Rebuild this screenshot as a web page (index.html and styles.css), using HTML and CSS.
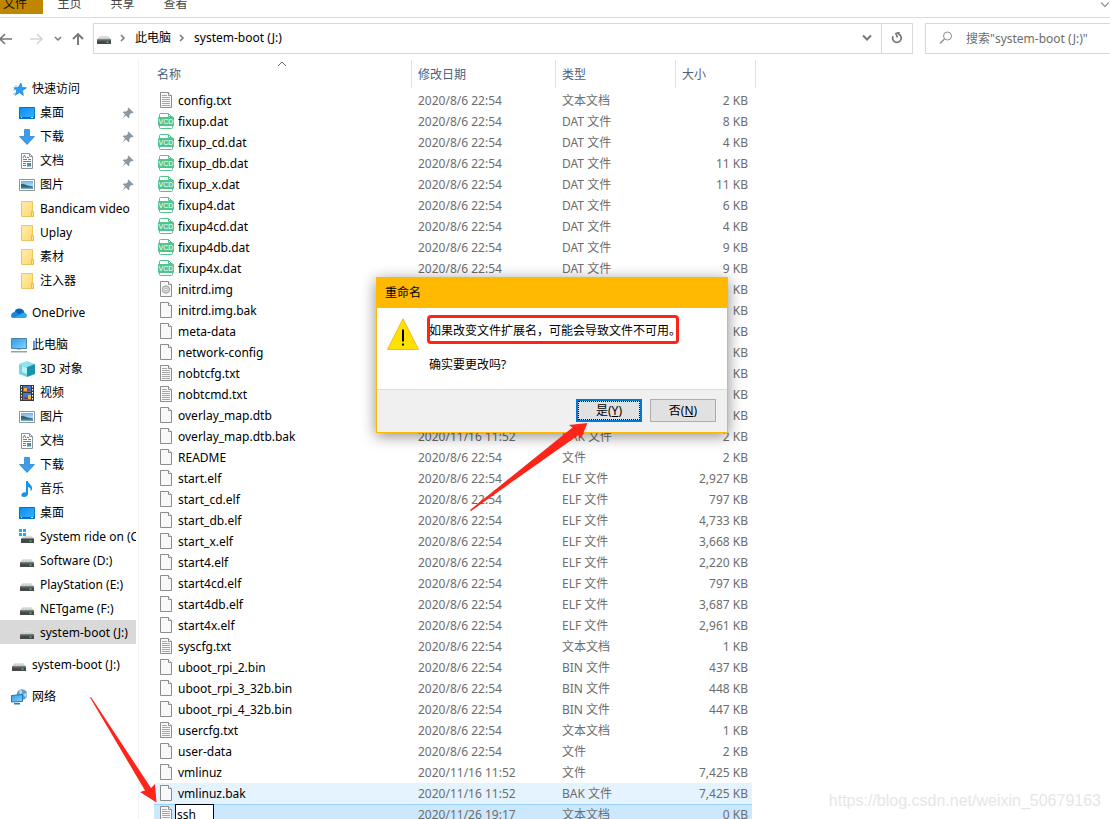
FILE: index.html
```html
<!DOCTYPE html>
<html lang="zh-CN">
<head>
<meta charset="utf-8">
<title>system-boot (J:)</title>
<link rel="stylesheet" href="styles.css">
</head>
<body>
<svg class="defs" aria-hidden="true">
  <defs>
    <linearGradient id="blue" x1="0" y1="0" x2="1" y2="1"><stop offset="0" stop-color="#0a8cf0"/><stop offset="1" stop-color="#38b4ff"/></linearGradient>
    <linearGradient id="screen" x1="0" y1="0" x2="1" y2="1"><stop offset="0" stop-color="#2f9be8"/><stop offset="1" stop-color="#7fd4ff"/></linearGradient>
    <linearGradient id="sky" x1="0" y1="0" x2="0" y2="1"><stop offset="0" stop-color="#6fb1e8"/><stop offset="1" stop-color="#e8f4fb"/></linearGradient>
    <linearGradient id="gold" x1="0" y1="0" x2="1" y2="1"><stop offset="0" stop-color="#ffeba8"/><stop offset="1" stop-color="#ffd970"/></linearGradient>
    <linearGradient id="metal" x1="0" y1="0" x2="0" y2="1"><stop offset="0" stop-color="#e4e6e7"/><stop offset="1" stop-color="#b9bdbf"/></linearGradient>
  </defs>
  <symbol id="i-page" viewBox="0 0 16 16"><path d="M2.500.500h8l3 3v12h-11z" fill="#f9f9f9" stroke="#8c8c8c"/><path d="M10.500.500v3h3" fill="#fff" stroke="#8c8c8c"/></symbol>
  <symbol id="i-text" viewBox="0 0 16 16"><path d="M2.500.500h8l3 3v12h-11z" fill="#f9f9f9" stroke="#8c8c8c"/><path d="M10.500.500v3h3" fill="#fff" stroke="#8c8c8c"/><path d="M4 3.500h5M4 5.500h8M4 7.500h8M4 9.500h8M4 11.500h8M4 13.500h8" stroke="#a6a6a6"/></symbol>
  <symbol id="i-disc" viewBox="0 0 16 16"><path d="M2.500.500h8l3 3v12h-11z" fill="#f9f9f9" stroke="#8c8c8c"/><path d="M10.500.500v3h3" fill="#fff" stroke="#8c8c8c"/><circle cx="8" cy="8.500" r="3.700" fill="#d3d6d8" stroke="#a0a4a7"/><circle cx="8" cy="8.500" r="1.200" fill="#fff" stroke="#999" stroke-width=".6"/></symbol>
  <symbol id="i-vcd" viewBox="0 0 16 16"><path d="M1.500 4V1.500a1 1 0 0 1 1-1h8l4 4M1.500 13v1.500a1 1 0 0 0 1 1h11a1 1 0 0 0 1-1V13M10.500.500v3h4" fill="none" stroke="#52c58c"/><rect y="4" width="16" height="9" rx="1" fill="#52c58c"/><text x="8" y="11" text-anchor="middle" class="vcd">VCD</text></symbol>
  <symbol id="i-drive" viewBox="0 0 16 16"><path d="M3.500 6h9L15 10H1z" fill="url(#metal)"/><path d="M1 9.500h14V14H1z" fill="#44484a"/><path d="M1 9.500h14v1H1z" fill="#74787a"/><path d="M10.500 11.500h2v1.200h-2z" fill="#3bea4a"/></symbol>
  <symbol id="i-sysdrive" viewBox="0 0 16 16"><path d="M0 0h3v3H0zM4 0h3v3H4zM0 4h3v3H0zM4 4h3v3H4z" fill="#18aef3"/><path d="M5 7h8l2 3H2z" fill="url(#metal)"/><path d="M2 9.500h13V14H2z" fill="#44484a"/><path d="M10.500 11.500h2v1.200h-2z" fill="#3bea4a"/></symbol>
  <symbol id="i-star" viewBox="0 0 16 16"><path d="M10 2l1 4.500 4.500.3-4 2.700.8 5-3.800-3-4.500 2.800 1.800-4.500-2.900-3 4.200-.2z" fill="#2ba0f2" stroke="#167bc8" stroke-width=".7"/><path d="M4 5h2M2 9h2M2 13h3" stroke="#7dbbe8"/></symbol>
  <symbol id="i-desktop" viewBox="0 0 16 16"><path d="M.500 2.500h15v11H.500z" fill="url(#blue)" stroke="#0a72c4"/><path d="M1 12h14v1H1z" fill="#076bb9"/><path d="M2 12h1v1H2zM12 12h2v1h-2z" fill="#bfe5ff"/></symbol>
  <symbol id="i-down" viewBox="0 0 16 16"><path d="M5.500.500h5v7h5L8 15.500.500 7.500h5z" fill="#3d9be9" stroke="#1d7fd0" stroke-width=".7"/></symbol>
  <symbol id="i-doc" viewBox="0 0 16 16"><path d="M2.500.500h8l3 3v12h-11z" fill="#fff" stroke="#8c9499"/><path d="M10.500.500v3h3" fill="none" stroke="#8c9499"/><path d="M4 5l1.500-3L7 5" fill="none" stroke="#3189c9"/><path d="M8 4.500h2M4 6.500h4M9 6.500h3M4 8.500h8M4 10.500h3M4 12.500h3" stroke="#348cc9"/><path d="M8 10h4v3.500H8z" fill="#548fae"/></symbol>
  <symbol id="i-pic" viewBox="0 0 16 16"><path d="M.500 2.500h15v11H.500z" fill="#fff" stroke="#8d9498"/><path d="M2 4h12v8H2z" fill="url(#sky)"/><path d="M2 7c3-1 4 1 7 1.500l5 1V12H2z" fill="#2f6978"/><path d="M2 10.500h12V12H2z" fill="#6da3c5"/></symbol>
  <symbol id="i-folder" viewBox="0 0 16 16"><path d="M2.500.500h11v15h-11z" fill="url(#gold)" stroke="#eec65b"/><path d="M12.500 10.500h2v5h-2z" fill="#ffe28a" stroke="#e7bb4e"/></symbol>
  <symbol id="i-cloud" viewBox="0 0 16 16"><path d="M3.500 7a5 4.500 0 0 1 9-1.500L14 9l-9 3z" fill="#0b62ba"/><path d="M0 11c0-3 2.500-4.500 5-4l8 6H3c-2 0-3-.8-3-2z" fill="#1888dc"/><path d="M3 13l8-5c2.500-1 5 .5 5 2.500S14.500 13 13 13z" fill="#31a8ee"/></symbol>
  <symbol id="i-pc" viewBox="0 0 16 16"><path d="M.500 1.500h15v10H.500z" fill="url(#screen)" stroke="#4d83a5"/><path d="M6 12h4v1H6z" fill="#bbc7ce"/><path d="M0 14h16v1.500H0z" fill="#8fa6b3"/></symbol>
  <symbol id="i-cube" viewBox="0 0 16 16"><path d="M0 3l8-3 8 3-8 3z" fill="#8be5ef"/><path d="M0 3l8 3v10l-8-3z" fill="#6fd6e2"/><path d="M16 3L8 6v10l8-3z" fill="#1b93ab"/><path d="M3 5l5 2v6l-5-2z" fill="#b8f2f6"/></symbol>
  <symbol id="i-film" viewBox="0 0 16 16"><path d="M1 0h14v16H1z" fill="#35383b"/><path d="M4 1h8v6H4z" fill="#4876c5"/><path d="M4 8h8v7H4z" fill="#4876c5"/><path d="M5 3h3v3H5zM9 10h3v4H9z" fill="#edb848"/><path d="M8 4h3v2H8zM5 12h4v2H5z" fill="#7c3f5d"/><path d="M2.500 1v15M13.500 1v15" stroke="#fff" stroke-dasharray="1.500 1.500"/></symbol>
  <symbol id="i-music" viewBox="0 0 16 16"><path d="M7 0h2c0 3 5 4 4 8-.4 1.500-1 2-1.500 2.500.8-2.500-.5-4-2.500-4.500v7c0 2-2 3-4 3s-3-1.200-2.500-2.500C3 12 5 11 7 11.500z" fill="#1694e8"/></symbol>
  <symbol id="i-net" viewBox="0 0 16 16"><circle cx="11" cy="5.500" r="5.300" fill="#5f9dc6"/><path d="M8 2c2-2 4 0 3 2L9 6zM12 5l4-1-1 5z" fill="#b6dcf2"/><path d="M.500 6.500l11-1v7l-11 .5z" fill="url(#screen)" stroke="#2476b1"/><path d="M3 14h6v1.500H3z" fill="#2d78ab"/></symbol>
  <symbol id="i-pin" viewBox="0 0 12 12"><path d="M6.500.500l5 5-1 .8-1.200-.2-2 2 .2 2.200-.9.900-2.600-2.600L.500 11.500 3 7.500.800 5.300l1-.9 2.400.2 2-2-.5-1.300z" fill="#8b97a1"/></symbol>
</svg>

<div class="explorer">
  <nav class="tabs" aria-label="功能区">
    <button class="tab tab-file">文件</button>
    <button class="tab">主页</button>
    <button class="tab">共享</button>
    <button class="tab">查看</button>
    <button class="expand" aria-label="展开功能区"><svg width="10" height="6" viewBox="0 0 10 6"><path d="M1 .500l4 4 4-4" fill="none" stroke="#9a9a9a" stroke-width="1.300"/></svg></button>
  </nav>

  <div class="toolbar">
    <div class="history">
      <button aria-label="后退"><svg width="14" height="14" viewBox="0 0 14 14"><path d="M14 7H2M7 2L2 7l5 5" fill="none" stroke="#777" stroke-width="1.600"/></svg></button>
      <button aria-label="前进"><svg width="14" height="14" viewBox="0 0 14 14"><path d="M0 7h12M7 2l5 5-5 5" fill="none" stroke="#d5d5d5" stroke-width="1.600"/></svg></button>
      <button aria-label="最近位置"><svg width="8" height="6" viewBox="0 0 8 6"><path d="M1 1l3 3 3-3" fill="none" stroke="#777" stroke-width="1.500"/></svg></button>
      <button aria-label="上移"><svg width="12" height="14" viewBox="0 0 12 14"><path d="M6 13V2M1 7l5-5 5 5" fill="none" stroke="#777" stroke-width="1.900"/></svg></button>
    </div>
    <div class="address">
      <svg class="icon"><use href="#i-drive"/></svg>
      <svg class="chev" width="6" height="8" viewBox="0 0 6 8"><path d="M1 1l3 3-3 3" fill="none" stroke="#777" stroke-width="1.500"/></svg>
      <button class="crumb">此电脑</button>
      <svg class="chev" width="6" height="8" viewBox="0 0 6 8"><path d="M1 1l3 3-3 3" fill="none" stroke="#777" stroke-width="1.500"/></svg>
      <button class="crumb">system-boot (J:)</button>
      <button class="drop" aria-label="历史记录"><svg width="10" height="8" viewBox="0 0 10 8"><path d="M1 1.500l4 4 4-4" fill="none" stroke="#777" stroke-width="2"/></svg></button>
      <button class="refresh" aria-label="刷新"><svg width="12" height="12" viewBox="0 0 12 12"><path d="M9 2.800a4.300 4.300 0 1 1-5.500-.3M1.500 1.500h4V5.500" fill="none" stroke="#777" stroke-width="1.700" transform="matrix(-1 0 0 1 12 0) rotate(20 6 6)"/></svg></button>
    </div>
    <label class="search">
      <svg width="14" height="14" viewBox="0 0 14 14"><circle cx="8.500" cy="5" r="4" fill="none" stroke="#8c8c8c"/><path d="M5.500 8L1 12.500" stroke="#8c8c8c" stroke-width="1.200"/></svg>
      <input type="search" aria-label="搜索" placeholder="搜索&quot;system-boot (J:)&quot;">
    </label>
  </div>

  <div class="main">
    <nav class="tree" aria-label="导航窗格">
      <div class="group">
        <a class="node root" href="#"><svg class="icon"><use href="#i-star"/></svg><span>快速访问</span></a>
        <a class="node" href="#"><svg class="icon"><use href="#i-desktop"/></svg><span>桌面</span><svg class="pin"><use href="#i-pin"/></svg></a>
        <a class="node" href="#"><svg class="icon"><use href="#i-down"/></svg><span>下载</span><svg class="pin"><use href="#i-pin"/></svg></a>
        <a class="node" href="#"><svg class="icon"><use href="#i-doc"/></svg><span>文档</span><svg class="pin"><use href="#i-pin"/></svg></a>
        <a class="node" href="#"><svg class="icon"><use href="#i-pic"/></svg><span>图片</span><svg class="pin"><use href="#i-pin"/></svg></a>
        <a class="node" href="#"><svg class="icon"><use href="#i-folder"/></svg><span>Bandicam video</span></a>
        <a class="node" href="#"><svg class="icon"><use href="#i-folder"/></svg><span>Uplay</span></a>
        <a class="node" href="#"><svg class="icon"><use href="#i-folder"/></svg><span>素材</span></a>
        <a class="node" href="#"><svg class="icon"><use href="#i-folder"/></svg><span>注入器</span></a>
      </div>
      <div class="group">
        <a class="node root" href="#"><svg class="icon"><use href="#i-cloud"/></svg><span>OneDrive</span></a>
      </div>
      <div class="group">
        <a class="node root" href="#"><svg class="icon"><use href="#i-pc"/></svg><span>此电脑</span></a>
        <a class="node" href="#"><svg class="icon"><use href="#i-cube"/></svg><span>3D 对象</span></a>
        <a class="node" href="#"><svg class="icon"><use href="#i-film"/></svg><span>视频</span></a>
        <a class="node" href="#"><svg class="icon"><use href="#i-pic"/></svg><span>图片</span></a>
        <a class="node" href="#"><svg class="icon"><use href="#i-doc"/></svg><span>文档</span></a>
        <a class="node" href="#"><svg class="icon"><use href="#i-down"/></svg><span>下载</span></a>
        <a class="node" href="#"><svg class="icon"><use href="#i-music"/></svg><span>音乐</span></a>
        <a class="node" href="#"><svg class="icon"><use href="#i-desktop"/></svg><span>桌面</span></a>
        <a class="node" href="#"><svg class="icon"><use href="#i-sysdrive"/></svg><span>System ride on (C:)</span></a>
        <a class="node" href="#"><svg class="icon"><use href="#i-drive"/></svg><span>Software (D:)</span></a>
        <a class="node" href="#"><svg class="icon"><use href="#i-drive"/></svg><span>PlayStation (E:)</span></a>
        <a class="node" href="#"><svg class="icon"><use href="#i-drive"/></svg><span>NETgame (F:)</span></a>
        <a class="node current" href="#"><svg class="icon"><use href="#i-drive"/></svg><span>system-boot (J:)</span></a>
      </div>
      <div class="group">
        <a class="node root" href="#"><svg class="icon"><use href="#i-drive"/></svg><span>system-boot (J:)</span></a>
      </div>
      <div class="group">
        <a class="node root" href="#"><svg class="icon"><use href="#i-net"/></svg><span>网络</span></a>
      </div>
    </nav>

    <div class="files">
      <table>
        <colgroup><col class="c-name"><col class="c-date"><col class="c-type"><col class="c-size"></colgroup>
        <thead><tr><th>名称<svg class="sort" width="10" height="6" viewBox="0 0 10 6"><path d="M1 5l4-4 4 4" fill="none" stroke="#666"/></svg></th><th>修改日期</th><th>类型</th><th>大小</th></tr></thead>
        <tbody>
          <tr><td><svg class="icon"><use href="#i-text"/></svg>config.txt</td><td>2020/8/6 22:54</td><td>文本文档</td><td>2 KB</td></tr>
          <tr><td><svg class="icon"><use href="#i-vcd"/></svg>fixup.dat</td><td>2020/8/6 22:54</td><td>DAT 文件</td><td>8 KB</td></tr>
          <tr><td><svg class="icon"><use href="#i-vcd"/></svg>fixup_cd.dat</td><td>2020/8/6 22:54</td><td>DAT 文件</td><td>4 KB</td></tr>
          <tr><td><svg class="icon"><use href="#i-vcd"/></svg>fixup_db.dat</td><td>2020/8/6 22:54</td><td>DAT 文件</td><td>11 KB</td></tr>
          <tr><td><svg class="icon"><use href="#i-vcd"/></svg>fixup_x.dat</td><td>2020/8/6 22:54</td><td>DAT 文件</td><td>11 KB</td></tr>
          <tr><td><svg class="icon"><use href="#i-vcd"/></svg>fixup4.dat</td><td>2020/8/6 22:54</td><td>DAT 文件</td><td>6 KB</td></tr>
          <tr><td><svg class="icon"><use href="#i-vcd"/></svg>fixup4cd.dat</td><td>2020/8/6 22:54</td><td>DAT 文件</td><td>4 KB</td></tr>
          <tr><td><svg class="icon"><use href="#i-vcd"/></svg>fixup4db.dat</td><td>2020/8/6 22:54</td><td>DAT 文件</td><td>9 KB</td></tr>
          <tr><td><svg class="icon"><use href="#i-vcd"/></svg>fixup4x.dat</td><td>2020/8/6 22:54</td><td>DAT 文件</td><td>9 KB</td></tr>
          <tr><td><svg class="icon"><use href="#i-disc"/></svg>initrd.img</td><td></td><td></td><td>KB</td></tr>
          <tr><td><svg class="icon"><use href="#i-page"/></svg>initrd.img.bak</td><td></td><td></td><td>KB</td></tr>
          <tr><td><svg class="icon"><use href="#i-page"/></svg>meta-data</td><td></td><td></td><td>KB</td></tr>
          <tr><td><svg class="icon"><use href="#i-page"/></svg>network-config</td><td></td><td></td><td>KB</td></tr>
          <tr><td><svg class="icon"><use href="#i-text"/></svg>nobtcfg.txt</td><td></td><td></td><td>KB</td></tr>
          <tr><td><svg class="icon"><use href="#i-text"/></svg>nobtcmd.txt</td><td></td><td></td><td>KB</td></tr>
          <tr><td><svg class="icon"><use href="#i-page"/></svg>overlay_map.dtb</td><td></td><td></td><td>KB</td></tr>
          <tr><td><svg class="icon"><use href="#i-page"/></svg>overlay_map.dtb.bak</td><td>2020/11/16 11:52</td><td>BAK 文件</td><td>2 KB</td></tr>
          <tr><td><svg class="icon"><use href="#i-page"/></svg>README</td><td>2020/8/6 22:54</td><td>文件</td><td>2 KB</td></tr>
          <tr><td><svg class="icon"><use href="#i-page"/></svg>start.elf</td><td>2020/8/6 22:54</td><td>ELF 文件</td><td>2,927 KB</td></tr>
          <tr><td><svg class="icon"><use href="#i-page"/></svg>start_cd.elf</td><td>2020/8/6 22:54</td><td>ELF 文件</td><td>797 KB</td></tr>
          <tr><td><svg class="icon"><use href="#i-page"/></svg>start_db.elf</td><td>2020/8/6 22:54</td><td>ELF 文件</td><td>4,733 KB</td></tr>
          <tr><td><svg class="icon"><use href="#i-page"/></svg>start_x.elf</td><td>2020/8/6 22:54</td><td>ELF 文件</td><td>3,668 KB</td></tr>
          <tr><td><svg class="icon"><use href="#i-page"/></svg>start4.elf</td><td>2020/8/6 22:54</td><td>ELF 文件</td><td>2,220 KB</td></tr>
          <tr><td><svg class="icon"><use href="#i-page"/></svg>start4cd.elf</td><td>2020/8/6 22:54</td><td>ELF 文件</td><td>797 KB</td></tr>
          <tr><td><svg class="icon"><use href="#i-page"/></svg>start4db.elf</td><td>2020/8/6 22:54</td><td>ELF 文件</td><td>3,687 KB</td></tr>
          <tr><td><svg class="icon"><use href="#i-page"/></svg>start4x.elf</td><td>2020/8/6 22:54</td><td>ELF 文件</td><td>2,961 KB</td></tr>
          <tr><td><svg class="icon"><use href="#i-text"/></svg>syscfg.txt</td><td>2020/8/6 22:54</td><td>文本文档</td><td>1 KB</td></tr>
          <tr><td><svg class="icon"><use href="#i-page"/></svg>uboot_rpi_2.bin</td><td>2020/8/6 22:54</td><td>BIN 文件</td><td>437 KB</td></tr>
          <tr><td><svg class="icon"><use href="#i-page"/></svg>uboot_rpi_3_32b.bin</td><td>2020/8/6 22:54</td><td>BIN 文件</td><td>448 KB</td></tr>
          <tr><td><svg class="icon"><use href="#i-page"/></svg>uboot_rpi_4_32b.bin</td><td>2020/8/6 22:54</td><td>BIN 文件</td><td>447 KB</td></tr>
          <tr><td><svg class="icon"><use href="#i-text"/></svg>usercfg.txt</td><td>2020/8/6 22:54</td><td>文本文档</td><td>1 KB</td></tr>
          <tr><td><svg class="icon"><use href="#i-page"/></svg>user-data</td><td>2020/8/6 22:54</td><td>文件</td><td>2 KB</td></tr>
          <tr><td><svg class="icon"><use href="#i-page"/></svg>vmlinuz</td><td>2020/11/16 11:52</td><td>文件</td><td>7,425 KB</td></tr>
          <tr class="hover"><td><svg class="icon"><use href="#i-page"/></svg>vmlinuz.bak</td><td>2020/11/16 11:52</td><td>BAK 文件</td><td>7,425 KB</td></tr>
          <tr class="selected"><td><svg class="icon"><use href="#i-text"/></svg><input class="rename" type="text" aria-label="文件名" value="ssh"></td><td>2020/11/26 19:17</td><td>文本文档</td><td>0 KB</td></tr>
        </tbody>
      </table>
    </div>
  </div>

  <section class="dialog" role="dialog" aria-labelledby="dialog-title">
    <h1 class="dialog-title" id="dialog-title">重命名</h1>
    <div class="dialog-body">
      <svg class="warn" width="32" height="32" viewBox="0 0 32 32"><path d="M16 .800L31.500 31.500H.500z" fill="#ffe100" stroke="#f5b921"/><path d="M15 11.500h2v12h-2zM15 25.500h2v2h-2z" fill="#000"/></svg>
      <div class="message">
        <p class="marked">如果改变文件扩展名，可能会导致文件不可用。</p>
        <p>确实要更改吗?</p>
      </div>
    </div>
    <div class="dialog-actions">
      <button class="btn btn-default"><span>是(<u>Y</u>)</span></button>
      <button class="btn"><span>否(<u>N</u>)</span></button>
    </div>
  </section>

  <svg class="arrow arrow-yes" width="120" height="90" viewBox="0 0 120 90"><path d="M0 89L102.500 6.500 99 4l18.500-2-6.500 15.500-2.500-3.500L1 90z" fill="#fd2419"/></svg>
  <svg class="arrow arrow-file" width="70" height="106" viewBox="0 0 70 106"><path d="M0 .500L1 0l60 91 4-4 1.500 18.500L50 95l5-1.500z" fill="#fd2419"/></svg>
  <div class="watermark">https://blog.csdn.net/weixin_50679163</div>
</div>
</body>
</html>
```

FILE: styles.css
```css
* { box-sizing: border-box; }

body {
  margin: 0;
  background: #fff;
  color: #000;
  font: 12px/20px "Noto Sans", "Noto Sans CJK SC", sans-serif;
}

button, input {
  margin: 0;
  padding: 0;
  border: 0;
  background: none;
  color: inherit;
  font: inherit;
}

.defs { position: absolute; width: 0; height: 0; }
.vcd { font: 7px "Liberation Sans", sans-serif; fill: #fff; }
.icon { flex: none; width: 16px; height: 16px; }

.explorer {
  position: relative;
  display: flex;
  flex-direction: column;
  height: 100vh;
  overflow: hidden;
}

/* Ribbon tabs */
.tabs {
  flex: none;
  display: flex;
  align-items: flex-end;
  height: 18px;
  padding-bottom: 3px;
  border-bottom: 1px solid #dadbdc;
}
.tab { width: 53px; height: 20px; color: #444; }
.tab-file { width: 43px; padding-right: 13px; background: #bf8600; color: #1e1500; }
.expand { margin-left: auto; height: 20px; }

/* Navigation and address bar */
.toolbar {
  flex: none;
  display: flex;
  align-items: center;
  height: 42px;
  padding-bottom: 2px;
}
.history {
  flex: none;
  display: flex;
  align-items: center;
  gap: 10px;
  width: 93px;
  padding-top: 2px;
}
.history button { display: flex; }
.history button:first-child { margin: 0 8px 0 -2px; }
.address {
  flex: 1;
  display: flex;
  align-items: center;
  height: 31px;
  padding-left: 2px;
  border: 1px solid #d9d9d9;
}
.chev { flex: none; margin: 0 9px 0 8px; }
.drop { margin-left: auto; width: 28px; }
.refresh { width: 31px; height: 29px; border-left: 1px solid #d9d9d9; }
.drop, .refresh { display: flex; align-items: center; justify-content: center; }
.search {
  flex: none;
  display: flex;
  align-items: center;
  gap: 13px;
  width: 185px;
  height: 31px;
  margin-left: 12px;
  padding-left: 13px;
  border: 1px solid #d9d9d9;
  border-right: 0;
}
.search svg { flex: none; }
.search input { flex: 1; min-width: 0; padding-top: 2px; outline: 0; }
.search input::placeholder { color: #6d6d6d; opacity: 1; }

/* Navigation pane */
.main { flex: 1; display: flex; min-height: 0; }
.tree {
  flex: none;
  display: flex;
  flex-direction: column;
  gap: 8px;
  width: 139px;
  padding: 16px 2px 0 0;
  border-right: 1px solid #f2f2f2;
}
.node {
  display: flex;
  align-items: center;
  gap: 5px;
  height: 24px;
  padding: 2px 0 0 19px;
  overflow: hidden;
  color: inherit;
  text-decoration: none;
  white-space: nowrap;
}
.root { padding-left: 11px; }
.pin { flex: none; width: 12px; height: 12px; margin: 0 2px 0 auto; }
.current { background: #d9d9d9; }

/* File list */
.files { flex: 1; min-width: 0; padding-left: 15px; }
table { width: 598px; table-layout: fixed; border-collapse: collapse; }
.c-name { width: 258px; }
.c-date { width: 144px; }
.c-type { width: 120px; }
.c-size { width: 76px; }
th {
  position: relative;
  height: 30px;
  padding: 0 0 0 6px;
  color: #4c607a;
  font-weight: normal;
  text-align: left;
}
th:first-child { padding-left: 3px; }
th::after {
  content: "";
  position: absolute;
  top: 0;
  right: 0;
  width: 1px;
  height: 28px;
  background: #e2e2e2;
}
th:last-child::after { right: -4px; }
.sort { position: absolute; top: 1px; left: 123px; }
td {
  height: 21px;
  padding: 0 0 0 6px;
  color: #6d6d6d;
  white-space: nowrap;
}
td:first-child { display: flex; align-items: center; gap: 4px; padding-left: 4px; color: #000; }
td .icon { margin-bottom: 2px; }
td:last-child { padding: 0 4px 0 0; text-align: right; }
.hover { background: #e5f3ff; }
.selected { background: #cce8ff; box-shadow: inset 0 1px #99d1ff; }
.rename {
  width: 39px;
  height: 21px;
  margin-left: -3px;
  padding-left: 1px;
  border: 1px solid #000;
  background: #fff;
  outline: 0;
}

/* Rename confirmation */
.dialog {
  position: absolute;
  top: 277px;
  left: 376px;
  width: 352px;
  border: 1px solid #ffb900;
  background: #fff;
  box-shadow: 0 3px 14px rgba(0, 0, 0, .45);
}
.dialog-title {
  margin: 0;
  padding: 0 8px;
  background: #ffb900;
  font-size: 12px;
  font-weight: normal;
  line-height: 30px;
}
.dialog-body { display: flex; gap: 8px; height: 81px; padding: 7px 10px; }
.warn { flex: none; margin-top: 3px; }
.message p { margin: 0; padding-left: 2px; }
.message .marked {
  width: 252px;
  margin-bottom: 11px;
  padding: 3px 0 0;
  border: 3px solid #fd2419;
  border-radius: 4px;
  text-indent: -1px;
  white-space: nowrap;
}
.dialog-actions {
  display: flex;
  justify-content: flex-end;
  gap: 8px;
  padding: 9px 11px 10px;
  border-top: 1px solid #dfdfdf;
  background: #f0f0f0;
}
.btn { width: 66px; height: 23px; border: 1px solid #adadad; background: #e1e1e1; }
.btn span { display: block; line-height: 19px; }
.btn-default { border: 2px solid #0078d7; }
.btn-default span { border: 1px dotted #000; line-height: 17px; }

/* Annotations */
.arrow { position: absolute; pointer-events: none; }
.arrow-yes { top: 421px; left: 470px; }
.arrow-file { top: 697px; left: 90px; }
.watermark {
  position: absolute;
  right: 9px;
  bottom: 8px;
  color: #e6e6e6;
  font: 16px/20px "Liberation Sans", sans-serif;
}
```
